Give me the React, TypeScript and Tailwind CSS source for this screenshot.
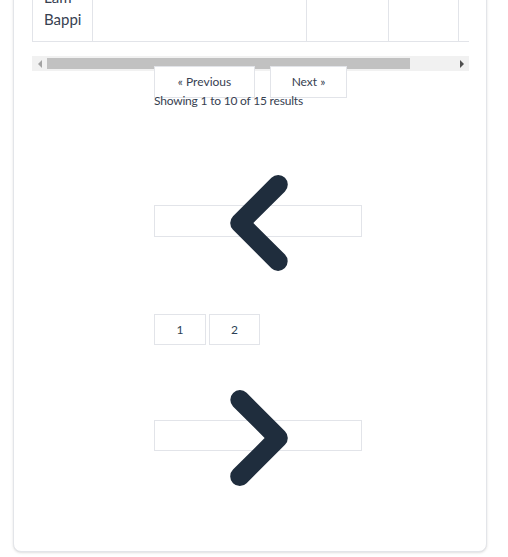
import React from "react";

function ChevronLeft() {
  return (
    <svg viewBox="0 0 20 20" fill="currentColor" className="absolute left-[8px] top-[-79px] w-[192px] h-[192px] text-[#1f2d3d]">
      <path
        fillRule="evenodd"
        clipRule="evenodd"
        d="M12.707 5.293a1 1 0 010 1.414L9.414 10l3.293 3.293a1 1 0 01-1.414 1.414l-4-4a1 1 0 010-1.414l4-4a1 1 0 011.414 0z"
      />
    </svg>
  );
}

function ChevronRight() {
  return (
    <svg viewBox="0 0 20 20" fill="currentColor" className="absolute left-[8px] top-[-79px] w-[192px] h-[192px] text-[#1f2d3d]">
      <path
        fillRule="evenodd"
        clipRule="evenodd"
        d="M7.293 14.707a1 1 0 010-1.414L10.586 10 7.293 6.707a1 1 0 011.414-1.414l4 4a1 1 0 010 1.414l-4 4a1 1 0 01-1.414 0z"
      />
    </svg>
  );
}

export default function App() {
  return (
    <div
      className="w-[508px] h-[557px] overflow-hidden bg-white text-[#374151]"
      style={{ fontFamily: "Lato, 'Open Sans', sans-serif" }}
    >
      <div className="ml-[13px] mt-[-60px] w-[474px] h-[612px] border border-[#e3e5e9] rounded-lg shadow-sm bg-white">
        <div className="pt-[33px] pl-[18px]">
          {/* table */}
          <div className="w-[437px] overflow-hidden">
            <div className="flex w-[600px] border border-[#e2e4e9]">
              <div className="w-[60px] shrink-0 border-r border-[#e2e4e9] px-[11px] py-[11px] text-[15px] leading-[22px] text-[#374151]">
                <div>Lam</div>
                <div>Bappi</div>
              </div>
              <div className="w-[214px] shrink-0 border-r border-[#e2e4e9]" />
              <div className="w-[82px] shrink-0 border-r border-[#e2e4e9]" />
              <div className="w-[70px] shrink-0 border-r border-[#e2e4e9]" />
              <div className="w-[100px] shrink-0 border-r border-[#e2e4e9]" />
            </div>
          </div>
          {/* fake scrollbar */}
          <div className="mt-[14px] w-[437px] h-[15px] bg-[#f1f1f1] flex items-center">
            <div className="w-[15px] h-[15px] flex items-center justify-center">
              <div className="w-0 h-0 border-y-[4px] border-y-transparent border-r-[4px] border-r-[#a3a3a3]" />
            </div>
            <div className="w-[363px] h-[11px] bg-[#c1c1c1]" />
            <div className="flex-1" />
            <div className="w-[15px] h-[15px] flex items-center justify-center">
              <div className="w-0 h-0 border-y-[4px] border-y-transparent border-l-[4px] border-l-[#505050]" />
            </div>
          </div>
        </div>

        {/* pagination */}
        <div className="pl-[140px] relative mt-[-5px]">
          <div className="flex gap-[15px]">
            <div className="w-[101px] h-[32px] border border-[#e2e4e9] bg-white flex items-center justify-center text-[12px] text-[#374151]">
              « Previous
            </div>
            <div className="w-[77px] h-[32px] border border-[#e2e4e9] bg-white flex items-center justify-center text-[12px] text-[#374151]">
              Next »
            </div>
          </div>
          <div className="text-[12px] leading-[16px] tracking-[-0.2px] text-[#374151] mt-[-5px]">
            Showing 1 to 10 of 15 results
          </div>

          <div className="mt-[96px] relative w-[208px] h-[32px] border border-[#e2e4e9]">
            <ChevronLeft />
          </div>

          <div className="mt-[77px] flex gap-[3px]">
            <div className="w-[52px] h-[31px] border border-[#e2e4e9] flex items-center justify-center text-[12px] text-[#2d3f55]">
              1
            </div>
            <div className="w-[51px] h-[31px] border border-[#e2e4e9] flex items-center justify-center text-[12px] text-[#2d3f55]">
              2
            </div>
          </div>

          <div className="mt-[75px] relative w-[208px] h-[31px] border border-[#e2e4e9]">
            <ChevronRight />
          </div>
        </div>
      </div>
    </div>
  );
}
